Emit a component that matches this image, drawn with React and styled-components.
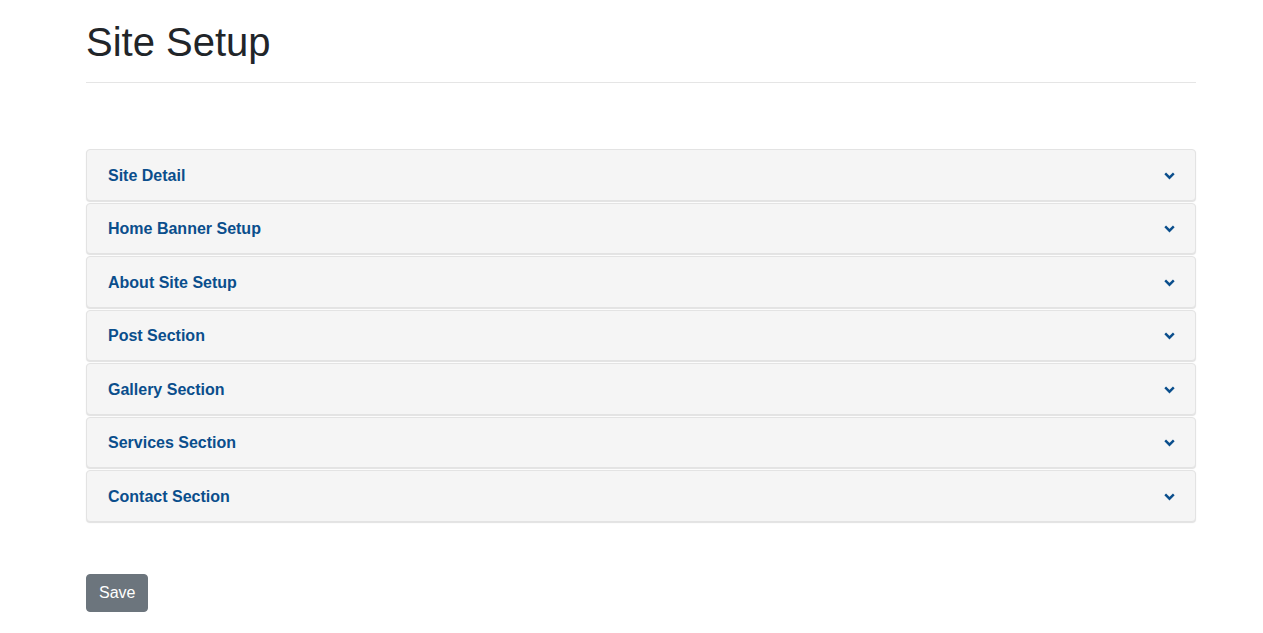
import React from 'react';
import styled, { createGlobalStyle } from 'styled-components';

const GlobalStyle = createGlobalStyle`
  html, body {
    margin: 0;
    padding: 0;
    background: #fff;
    font-family: "Liberation Sans", Arial, Helvetica, sans-serif;
    color: #212529;
  }
`;

const SECTIONS = [
  'Site Detail',
  'Home Banner Setup',
  'About Site Setup',
  'Post Section',
  'Gallery Section',
  'Services Section',
  'Contact Section',
];

const Page = styled.div`
  width: 1110px;
  padding: 18px 0 0 86px;
`;

const Header = styled.div`
  border-bottom: 1px solid #e5e5e5;
  padding-bottom: 16px;
  margin-bottom: 66px;
`;

const Title = styled.h1`
  margin: 0;
  font-size: 40px;
  font-weight: 400;
  line-height: 48px;
  color: #212529;
`;

const Accordion = styled.div`
  display: flex;
  flex-direction: column;
  gap: 2px;
`;

const Card = styled.div`
  height: 51.5px;
  box-sizing: border-box;
  display: flex;
  align-items: center;
  justify-content: space-between;
  padding: 2px 20px 0 21px;
  background: #f5f5f5;
  border: 1px solid #e3e3e3;
  border-radius: 4px;
  box-shadow: 0 1px 1px rgba(0, 0, 0, 0.12);
  cursor: pointer;
`;

const CardTitle = styled.span`
  font-size: 16px;
  font-weight: 700;
  color: #0a4e8c;
`;

const Chevron = () => (
  <svg width="11" height="8" viewBox="0 0 11 8">
    <path d="M1.2 1.4 L5.5 5.7 L9.8 1.4" fill="none" stroke="#0a4e8c" strokeWidth="2.4" />
  </svg>
);

const SaveButton = styled.button`
  margin-top: 52px;
  height: 38px;
  padding: 0 12px;
  background: #6c757d;
  border: 1px solid #6c757d;
  border-radius: 4px;
  color: #fff;
  font-family: "Liberation Sans", Arial, sans-serif;
  font-size: 16px;
  line-height: 24px;
  cursor: pointer;
`;

export default function App() {
  return (
    <Page>
      <GlobalStyle />
      <Header>
        <Title>Site Setup</Title>
      </Header>
      <Accordion>
        {SECTIONS.map((s) => (
          <Card key={s}>
            <CardTitle>{s}</CardTitle>
            <Chevron />
          </Card>
        ))}
      </Accordion>
      <SaveButton>Save</SaveButton>
    </Page>
  );
}
